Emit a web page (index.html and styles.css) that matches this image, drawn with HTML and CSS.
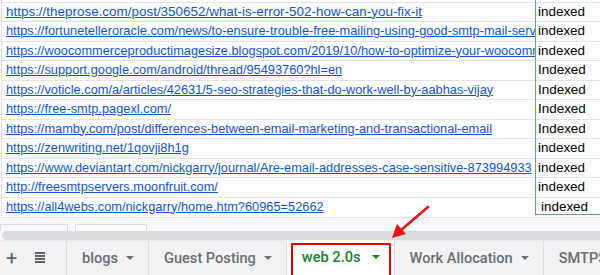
FILE: index.html
```html
<!DOCTYPE html>
<html>
<head>
<meta charset="utf-8">
<link rel="stylesheet" href="styles.css">
</head>
<body>
<div class="page">
  <div class="grid">
    <div class="row"><div class="url url-wide"><a href="#">https://theprose.com/post/350652/what-is-error-502-how-can-you-fix-it</a></div><div class="status">indexed</div></div>
    <div class="row"><div class="url"><a href="#">https://fortunetelleroracle.com/news/to-ensure-trouble-free-mailing-using-good-smtp-mail-server-186380</a></div><div class="status">indexed</div></div>
    <div class="row"><div class="url"><a href="#">https://woocommerceproductimagesize.blogspot.com/2019/10/how-to-optimize-your-woocommerce-store.html</a></div><div class="status">indexed</div></div>
    <div class="row"><div class="url"><a href="#">https://support.google.com/android/thread/95493760?hl=en</a></div><div class="status">Indexed</div></div>
    <div class="row"><div class="url"><a href="#">https://voticle.com/a/articles/42631/5-seo-strategies-that-do-work-well-by-aabhas-vijay</a></div><div class="status">Indexed</div></div>
    <div class="row"><div class="url"><a href="#">https://free-smtp.pagexl.com/</a></div><div class="status">Indexed</div></div>
    <div class="row"><div class="url"><a href="#">https://mamby.com/post/differences-between-email-marketing-and-transactional-email</a></div><div class="status">Indexed</div></div>
    <div class="row"><div class="url"><a href="#">https://zenwriting.net/1qovji8h1g</a></div><div class="status">indexed</div></div>
    <div class="row"><div class="url"><a href="#">https://www.deviantart.com/nickgarry/journal/Are-email-addresses-case-sensitive-873994933</a></div><div class="status">indexed</div></div>
    <div class="row"><div class="url"><a href="#">http://freesmtpservers.moonfruit.com/</a></div><div class="status">indexed</div></div>
    <div class="row"><div class="url"><a href="#">https://all4webs.com/nickgarry/home.htm?60965=52662</a></div><div class="status status-pad">indexed</div></div>
    <div class="selection"></div>
  </div>
  <div class="gutter">
    <div class="boxes">
      <div class="box box-gray"></div>
      <div class="box"></div>
    </div>
    <div class="scrollbar"></div>
  </div>
  <div class="tabbar">
    <div class="tools">
      <span class="plus">+</span>
      <span class="list"><i></i><i></i><i></i><i></i></span>
    </div>
    <div class="tab"><span>blogs</span><b class="caret"></b></div>
    <div class="tab"><span>Guest Posting</span><b class="caret"></b></div>
    <div class="tab active"><span>web 2.0s</span><b class="caret"></b></div>
    <div class="tab"><span>Work Allocation</span><b class="caret"></b></div>
    <div class="tab"><span>SMTPS</span><b class="caret"></b></div>
  </div>
  <svg class="arrow" width="600" height="275" viewBox="0 0 600 275">
    <line x1="428" y1="207" x2="400" y2="231" stroke="#e8141b" stroke-width="2.6" stroke-linecap="round"/>
    <polygon points="392,238 397,224 406,234" fill="#e8141b"/>
  </svg>
</div>
</body>
</html>
```
FILE: styles.css
```css
html, body {
  margin: 0;
  padding: 0;
  background: #ffffff;
}
.page {
  position: relative;
  width: 600px;
  height: 275px;
  overflow: hidden;
  font-family: "Liberation Sans", Arial, sans-serif;
}
.grid {
  position: relative;
  padding-top: 1.5px;
  border-left: 1px solid #e2e3e3;
  margin-left: 1px;
}
.row {
  display: flex;
  height: 19.5px;
  box-sizing: border-box;
  border-top: 1px solid #e2e3e3;
}
.url {
  width: 533px;
  flex: none;
  overflow: hidden;
  white-space: nowrap;
  padding-left: 4px;
  box-sizing: border-box;
  font-size: 12.8px;
  line-height: 18px;
}
.url-wide {
  font-size: 13.45px;
}
.url a {
  color: #1155cc;
  text-decoration: underline;
}
.status {
  flex: 1;
  padding-left: 2px;
  font-size: 13.45px;
  line-height: 18px;
  color: #000;
  white-space: nowrap;
  overflow: hidden;
  border-left: 1px solid #e2e3e3;
}
.status-pad {
  padding-left: 5px;
}
.selection {
  position: absolute;
  left: 533px;
  top: -2px;
  width: 80px;
  height: 216.5px;
  border: 1px solid #6aa879;
  box-sizing: border-box;
  pointer-events: none;
}
.gutter {
  height: 22px;
  margin-top: 0.5px;
  border-top: 1px solid #e2e3e3;
  background: #f8f9fa;
  display: flex;
  flex-direction: column;
  justify-content: flex-end;
}
.boxes {
  display: flex;
  gap: 7px;
  height: 7px;
}
.box {
  width: 72px;
  background: #ffffff;
  border: 1px solid #dadce0;
  border-bottom: none;
  box-sizing: border-box;
}
.box-gray {
  width: 68px;
  background: #f8f9fa;
}
.scrollbar {
  height: 9px;
  margin-left: 2px;
  background: #dadce0;
  border-radius: 5px 0 0 5px;
}
.tabbar {
  display: flex;
  height: 35px;
  background: #f1f3f4;
  border-top: 1px solid #e8eaed;
  box-sizing: border-box;
  font-family: Roboto, "Open Sans", sans-serif;
  font-size: 14.6px;
  font-weight: 500;
  color: #6b6f74;
}
.tools {
  width: 67px;
  flex: none;
  display: flex;
  align-items: center;
  gap: 18px;
  padding-left: 6px;
  box-sizing: border-box;
  border-right: 1px solid #dadce0;
}
.plus {
  font-size: 20px;
  font-weight: 400;
  color: #5f6368;
  line-height: 20px;
}
.list {
  display: flex;
  flex-direction: column;
  gap: 1.5px;
  width: 10px;
}
.list i {
  display: block;
  height: 1.5px;
  background: #5f6368;
}
.tab {
  display: flex;
  align-items: center;
  gap: 8px;
  padding: 0 14px 0 15px;
  border-right: 1px solid #dadce0;
  white-space: nowrap;
  position: relative;
}
.caret {
  width: 0;
  height: 0;
  border-left: 4px solid transparent;
  border-right: 4px solid transparent;
  border-top: 4px solid #6b6f74;
}
.tab.active {
  background: #ffffff;
  color: #188038;
  margin-top: -1px;
  padding-left: 15px;
  padding-right: 14px;
  gap: 11px;
}
.tab.active .caret {
  border-top-color: #188038;
}
.tab.active::after {
  content: "";
  position: absolute;
  left: 4px;
  right: 3px;
  top: 3px;
  bottom: -4px;
  border: 2px solid #e60000;
}
.arrow {
  position: absolute;
  left: 0;
  top: 0;
  pointer-events: none;
}
```
